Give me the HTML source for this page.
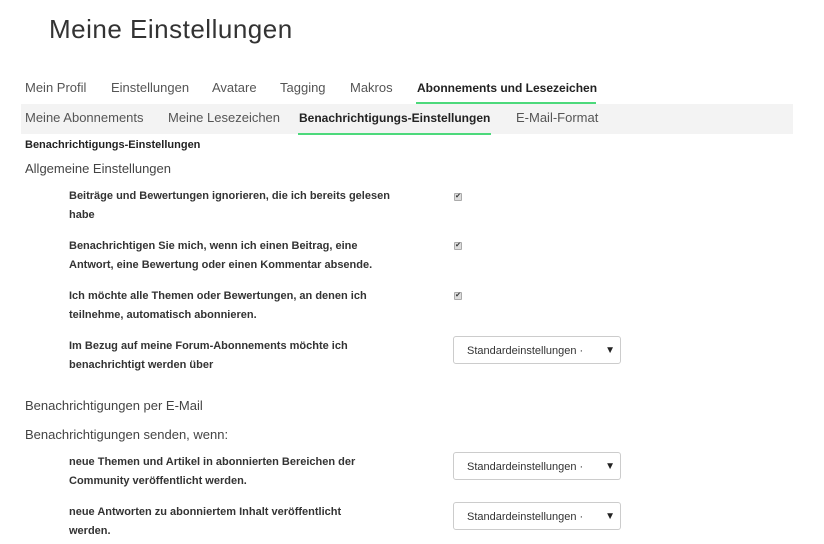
<!DOCTYPE html>
<html><head><meta charset="utf-8"><style>
*{margin:0;padding:0;box-sizing:border-box}
body{width:824px;height:544px;background:#fff;font-family:"Liberation Sans",sans-serif;color:#333;position:relative;overflow:hidden}
.a{position:absolute;white-space:nowrap}
h1{position:absolute;left:49px;top:14px;font-size:26px;letter-spacing:0.5px;font-weight:normal;color:#333}
.nav{font-size:13px;color:#555}
.b{font-weight:bold;color:#222;font-size:12px}
.lbl{font-size:11px;font-weight:bold;color:#333;line-height:19px;white-space:normal;width:330px}
.cb{position:absolute;width:8px;height:8px;border:1px solid #aaa;background:#ddd;border-radius:1px;font-size:7px;line-height:6px;text-align:center;color:#333}
.sel{position:absolute;width:168px;height:28px;border:1px solid #ccc;border-radius:3px;background:#fff;font-size:11px;color:#333;padding:8px 0 0 13px}
.sel span{position:absolute;right:5px;top:8px;font-size:10px;color:#222}
.h{font-size:13px;color:#444}
</style></head><body>
<h1>Meine Einstellungen</h1>
<div class="a nav" style="left:25px;top:80px">Mein Profil</div>
<div class="a nav" style="left:111px;top:80px">Einstellungen</div>
<div class="a nav" style="left:212px;top:80px">Avatare</div>
<div class="a nav" style="left:280px;top:80px">Tagging</div>
<div class="a nav" style="left:350px;top:80px">Makros</div>
<div class="a nav b" style="left:417px;top:81px">Abonnements und Lesezeichen</div>
<div class="a" style="left:416px;top:102px;width:180px;height:2px;background:#4cd97b"></div>
<div class="a" style="left:21px;top:104px;width:772px;height:30px;background:#f3f3f3"></div>
<div class="a nav" style="left:25px;top:110px">Meine Abonnements</div>
<div class="a nav" style="left:168px;top:110px">Meine Lesezeichen</div>
<div class="a nav b" style="left:299px;top:111px">Benachrichtigungs-Einstellungen</div>
<div class="a nav" style="left:516px;top:110px">E-Mail-Format</div>
<div class="a" style="left:298px;top:133px;width:193px;height:2px;background:#4cd97b"></div>
<div class="a" style="left:25px;top:139px;font-size:11px;font-weight:bold;color:#222">Benachrichtigungs-Einstellungen</div>
<div class="a h" style="left:25px;top:161px">Allgemeine Einstellungen</div>
<div class="a lbl" style="left:69px;top:187px">Beiträge und Bewertungen ignorieren, die ich bereits gelesen habe</div>
<div class="cb" style="left:454px;top:193px">✔</div>
<div class="a lbl" style="left:69px;top:237px">Benachrichtigen Sie mich, wenn ich einen Beitrag, eine Antwort, eine Bewertung oder einen Kommentar absende.</div>
<div class="cb" style="left:454px;top:242px">✔</div>
<div class="a lbl" style="left:69px;top:287px">Ich möchte alle Themen oder Bewertungen, an denen ich teilnehme, automatisch abonnieren.</div>
<div class="cb" style="left:454px;top:292px">✔</div>
<div class="a lbl" style="left:69px;top:337px">Im Bezug auf meine Forum-Abonnements möchte ich benachrichtigt werden über</div>
<div class="sel" style="left:453px;top:336px">Standardeinstellungen ·<span>▼</span></div>
<div class="a h" style="left:25px;top:398px">Benachrichtigungen per E-Mail</div>
<div class="a h" style="left:25px;top:427px">Benachrichtigungen senden, wenn:</div>
<div class="a lbl" style="left:69px;top:453px;width:310px">neue Themen und Artikel in abonnierten Bereichen der Community veröffentlicht werden.</div>
<div class="sel" style="left:453px;top:452px">Standardeinstellungen ·<span>▼</span></div>
<div class="a lbl" style="left:69px;top:503px;width:300px">neue Antworten zu abonniertem Inhalt veröffentlicht werden.</div>
<div class="sel" style="left:453px;top:502px">Standardeinstellungen ·<span>▼</span></div>
</body></html>
